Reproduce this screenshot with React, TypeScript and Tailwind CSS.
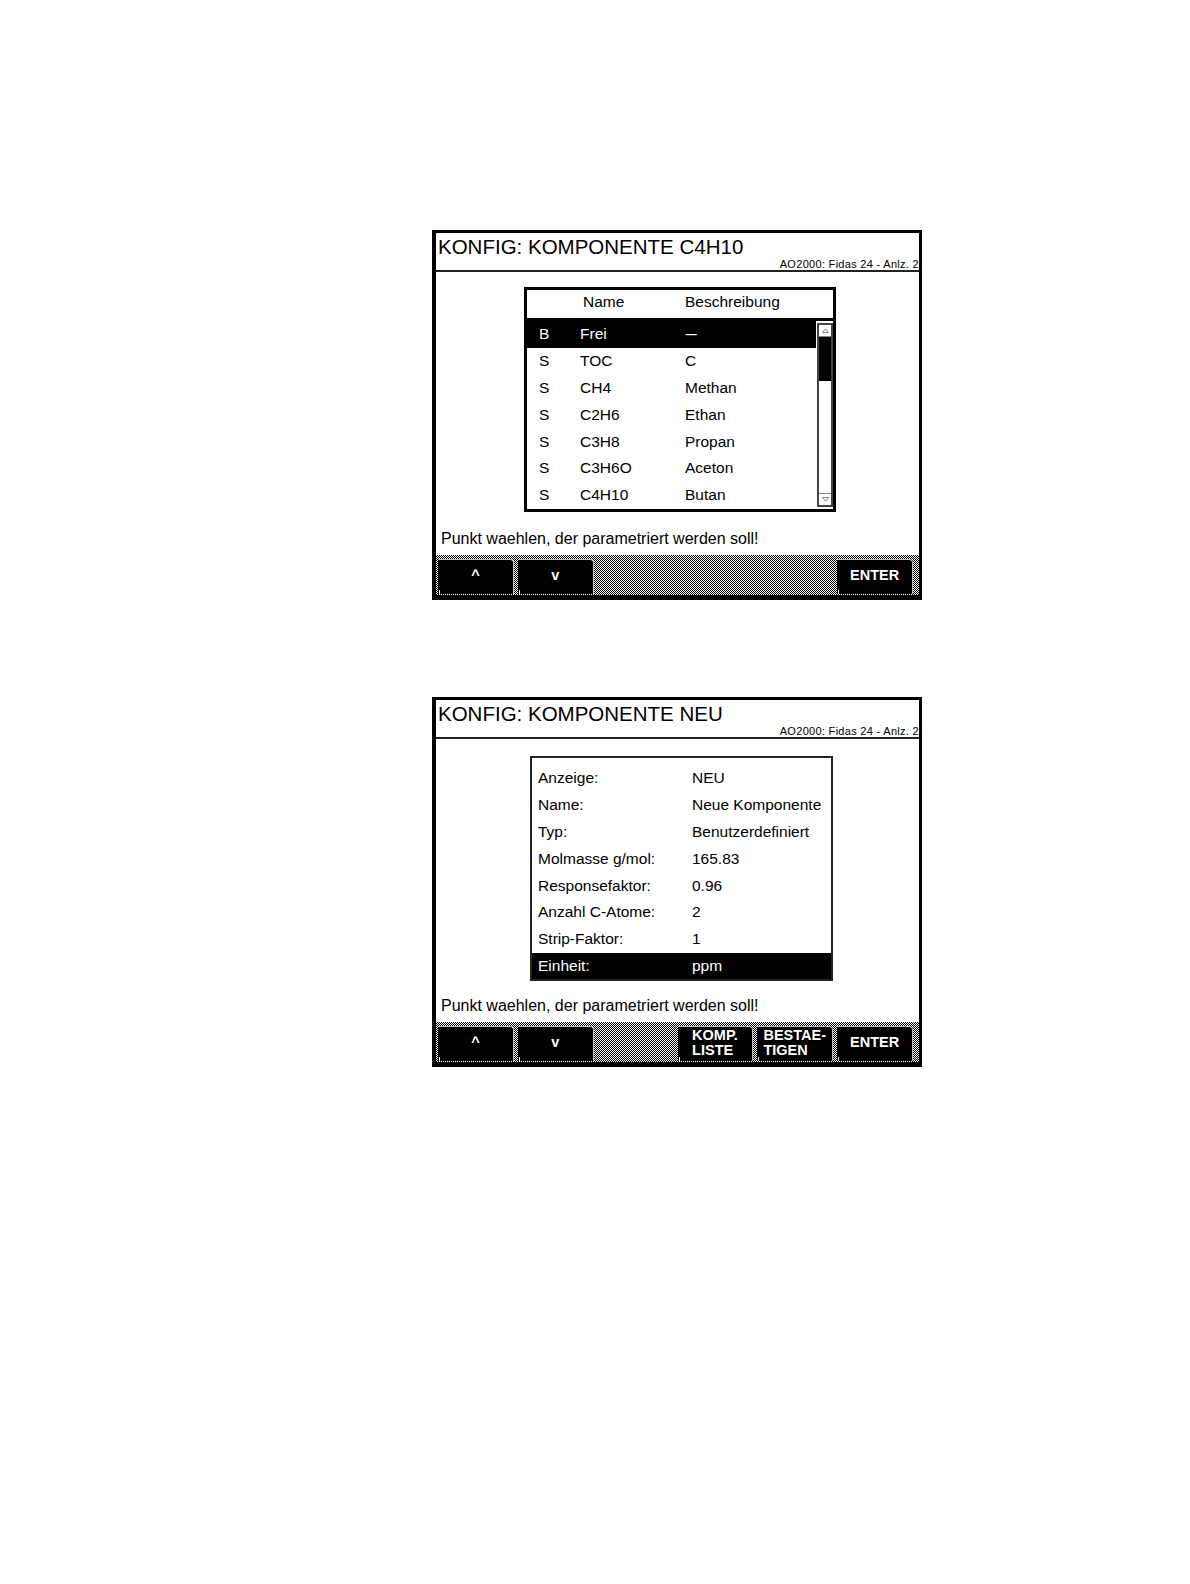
import React from "react";

const rows1: [string, string, string][] = [
  ["B", "Frei", "---"],
  ["S", "TOC", "C"],
  ["S", "CH4", "Methan"],
  ["S", "C2H6", "Ethan"],
  ["S", "C3H8", "Propan"],
  ["S", "C3H6O", "Aceton"],
  ["S", "C4H10", "Butan"],
];

const rows2: [string, string][] = [
  ["Anzeige:", "NEU"],
  ["Name:", "Neue Komponente"],
  ["Typ:", "Benutzerdefiniert"],
  ["Molmasse g/mol:", "165.83"],
  ["Responsefaktor:", "0.96"],
  ["Anzahl C-Atome:", "2"],
  ["Strip-Faktor:", "1"],
  ["Einheit:", "ppm"],
];

function Btn({ lines }: { lines?: string[] }) {
  if (!lines) return <div className="h-[35px]" />;
  return (
    <div className="relative h-[35px] bg-black border-t border-r border-[#bdbdbd] rounded-tr-[4px] flex items-center justify-center pb-[3px] text-white font-bold text-[14.5px] leading-[15px]">
      <div className="text-left">
        {lines.map((l, i) => (
          <div key={i}>{l}</div>
        ))}
      </div>
      <div className="absolute left-[1px] bottom-0 w-[1px] h-[4px] bg-white" />
    </div>
  );
}

function ButtonBar({ buttons }: { buttons: (string[] | undefined)[] }) {
  return (
    <div className="h-[40px] pl-[2px] pr-[6px] pt-[4px] bg-[repeating-conic-gradient(#000_0%_25%,#fff_0%_50%)] bg-[length:2px_2px]">
      <div className="grid grid-cols-6 gap-x-[4px]">
        {buttons.map((b, i) => (
          <Btn key={i} lines={b} />
        ))}
      </div>
    </div>
  );
}

function Header({ title }: { title: string }) {
  return (
    <div className="h-[39px] border-b-2 border-[#222] flex flex-col pt-[3px]">
      <div className="pl-[2px] text-[20.5px] leading-[22px] text-black">{title}</div>
      <div className="self-end text-[11px] leading-[12px] tracking-[0.3px] text-black whitespace-nowrap">
        AO2000: Fidas 24 - Anlz. 2
      </div>
    </div>
  );
}

function Scrollbar() {
  return (
    <div className="mt-[2px] mb-[2px] w-[16px] border-2 border-[#444] bg-white flex flex-col">
      <div className="h-[12px] border-b border-[#888] flex items-center justify-center">
        <svg width="7" height="5" viewBox="0 0 7 5">
          <path d="M0.5 4.5 L3.5 0.8 L6.5 4.5 Z" fill="none" stroke="#888" strokeWidth="1" />
        </svg>
      </div>
      <div className="h-[44px] bg-black" />
      <div className="flex-1" />
      <div className="h-[12px] border-t border-[#888] flex items-center justify-center">
        <svg width="7" height="5" viewBox="0 0 7 5">
          <path d="M0.5 0.5 L3.5 4.2 L6.5 0.5 Z" fill="none" stroke="#888" strokeWidth="1" />
        </svg>
      </div>
    </div>
  );
}

function Frame({ children }: { children: React.ReactNode }) {
  return (
    <div className="w-[490px] h-[370px] bg-white border-l-4 border-t-[3px] border-r-[3px] border-b-[5px] border-black flex flex-col">
      {children}
    </div>
  );
}

export default function App() {
  return (
    <div className="min-h-[1584px] w-[1190px] bg-white font-['Liberation_Sans',Arial,sans-serif] text-black pt-[230px] pl-[432px]">
      <div className="flex flex-col gap-[97px]">
        <Frame>
          <Header title="KONFIG: KOMPONENTE C4H10" />
          <div className="pt-[15px]">
            <div className="ml-[88px] w-[312px] h-[225px] border-[3px] border-black flex flex-col">
              <div className="h-[31px] border-b-[3px] border-black flex text-[15.5px] leading-[18px] pt-[3px]">
                <div className="w-[56px]" />
                <div className="w-[102px]">Name</div>
                <div>Beschreibung</div>
              </div>
              <div className="flex-1 flex gap-[1px]">
                <div className="w-[289px] flex flex-col">
                  {rows1.map((r, i) => (
                    <div
                      key={i}
                      className={`h-[26.8px] flex items-center text-[15.5px] leading-[18px] ${
                        i === 0 ? "bg-black text-white" : ""
                      }`}
                    >
                      <div className="w-[53px] pl-[12px]">{r[0]}</div>
                      <div className="w-[105px]">{r[1]}</div>
                      <div className={i === 0 ? "tracking-[-1.5px]" : ""}>{r[2]}</div>
                    </div>
                  ))}
                </div>
                <Scrollbar />
              </div>
            </div>
          </div>
          <div className="mt-[18px] pl-[5px] text-[16px] leading-[18px] h-[18px]">
            Punkt waehlen, der parametriert werden soll!
          </div>
          <div className="mt-[7px]">
            <ButtonBar buttons={[["^"], ["v"], undefined, undefined, undefined, ["ENTER"]]} />
          </div>
        </Frame>

        <Frame>
          <Header title="KONFIG: KOMPONENTE NEU" />
          <div className="pt-[17px]">
            <div className="ml-[94px] w-[303px] border-2 border-[#222] pt-[7px] flex flex-col">
              {rows2.map((r, i) => (
                <div
                  key={i}
                  className={`h-[26.8px] flex items-center text-[15.5px] leading-[18px] ${
                    i === rows2.length - 1 ? "bg-black text-white" : ""
                  }`}
                >
                  <div className="w-[160px] pl-[6px]">{r[0]}</div>
                  <div className="whitespace-nowrap">{r[1]}</div>
                </div>
              ))}
            </div>
          </div>
          <div className="mt-[16px] pl-[5px] text-[16px] leading-[18px] h-[18px]">
            Punkt waehlen, der parametriert werden soll!
          </div>
          <div className="mt-[7px]">
            <ButtonBar
              buttons={[["^"], ["v"], undefined, ["KOMP.", "LISTE"], ["BESTAE-", "TIGEN"], ["ENTER"]]}
            />
          </div>
        </Frame>
      </div>
    </div>
  );
}
